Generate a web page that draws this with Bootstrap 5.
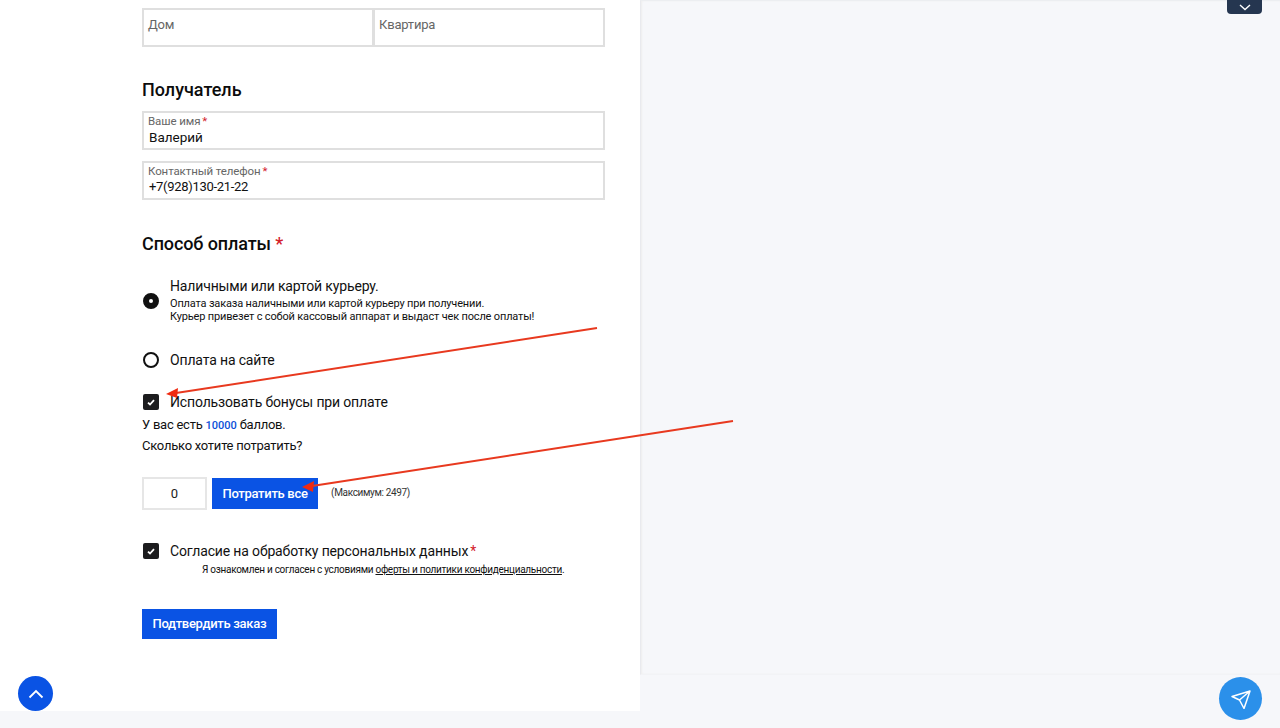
<!DOCTYPE html>
<html lang="ru">
<head>
<meta charset="utf-8">
<title>Оформление заказа</title>
<link href="https://cdn.jsdelivr.net/npm/bootstrap@5.3.0/dist/css/bootstrap.min.css" rel="stylesheet">
<style>
html,body{height:728px;overflow:hidden}
body{background:#f6f7fa;font-family:Roboto,"Liberation Sans",sans-serif;color:#111;position:relative}
.pane-left{width:640px;height:711px;background:#fff;padding:8px 35px 0 142px;flex:none}
.pane-right{flex:1;height:675px;border-left:1px solid #e9eaee;border-top:1px solid #eceef1;border-bottom:1px solid #f2f3f6;box-shadow:inset 1px 0 2px #eee}
.fld{border:2px solid #dfdfdf;background:#fff;height:39px;padding:0 4px;color:#666;line-height:16px}
.fld-half{flex:1 1 0;font-size:13px;letter-spacing:-.2px;padding-top:7px}
.fld-half+.fld-half{margin-left:-1px}
.fld-next{margin-top:11px}
.fld-lab{display:block;padding-top:1px;font-size:11.5px;line-height:15px;letter-spacing:-.1px}
.fld-val{display:block;color:#111;font-size:13.5px;line-height:16px;padding-left:1px}
.fld-tel{font-size:13px;letter-spacing:-.3px}
.req{color:#d3202a;margin-left:2px}
.sec-title{font-size:18px;font-weight:500;line-height:22px;color:#0c0c0c;margin:0}
.sec-title .req{margin-left:0}
.t1{margin-top:32px;margin-bottom:10px}
.t2{margin-top:33px;letter-spacing:-.1px}
.mark-radio{width:16px;height:16px;border:2px solid #111;border-radius:50%;flex:none;margin:0 11px 0 1px}
.mark-on{background:#111;position:relative;margin-top:3px}
.mark-on::after{content:"";position:absolute;left:4px;top:4px;width:4px;height:4px;border-radius:50%;background:#fff}
.mark-box{width:16px;height:16px;border-radius:2px;background:#1c1c1e;flex:none;margin:0 11px 0 1px;display:flex;align-items:center;justify-content:center}
.opt-main{font-size:14px;line-height:20px;letter-spacing:-.15px}
.opt-sub{font-size:11px;line-height:13px;color:#111;letter-spacing:-.165px}
.opt1{margin-top:21px}
.opt1 .opt-main{margin-bottom:1px}
.opt2{margin-top:27px}
.opt3{margin-top:22px}
.para{font-size:13px;line-height:16px;margin:0;letter-spacing:-.25px}
.para-a{margin-top:5px}
.para-b{margin-top:4px}
.pts{color:#0a4fd8;font-weight:500;font-size:11px;letter-spacing:0}
.spend-row{margin-top:23px}
.qty{width:65px;height:33px;border:2px solid #e6e6e6;text-align:center;font-size:13px;line-height:29px;color:#222}
.btn-blue{background:#0a53e4;border:0;border-radius:0;color:#fff;font-weight:500;font-size:13px;line-height:16px;padding:7px 10.5px;height:31px;letter-spacing:-.3px}
.btn-blue:hover{background:#0a53e4;color:#fff}
.btn-spend{margin-left:5px}
.maxi{font-size:10px;letter-spacing:-.35px;color:#333;margin-left:13px;margin-top:-2px}
.opt4{margin-top:31px}
.agree{font-size:10px;letter-spacing:-.28px;line-height:14px;margin:2px 0 0 60px;color:#111;white-space:nowrap}
.agree a{color:#111}
.btn-order{margin-top:32px;height:30px;padding-top:6px}
.tab-top{position:absolute;top:0;left:1227px;width:35px;height:14px;background:#253650;border-radius:0 0 4px 4px;display:flex;align-items:center;justify-content:center}
.fab{position:absolute;border-radius:50%;display:flex;align-items:center;justify-content:center}
.fab-up{left:18px;top:676px;width:35px;height:35px;background:#0a53e4}
.fab-send{left:1219px;top:677px;width:43px;height:43px;background:#2b90ea}
.arrows{position:absolute;left:0;top:0;pointer-events:none}
</style>
</head>
<body>
<div class="d-flex align-items-start">
  <main class="pane-left">
    <div class="d-flex">
      <div class="fld fld-half">Дом</div>
      <div class="fld fld-half">Квартира</div>
    </div>
    <h2 class="sec-title t1">Получатель</h2>
    <div class="fld"><span class="fld-lab">Ваше имя<span class="req">*</span></span><span class="fld-val">Валерий</span></div>
    <div class="fld fld-next"><span class="fld-lab">Контактный телефон<span class="req">*</span></span><span class="fld-val fld-tel">+7(928)130-21-22</span></div>
    <h2 class="sec-title t2">Способ оплаты <span class="req">*</span></h2>
    <div class="d-flex align-items-center opt1">
      <span class="mark-radio mark-on"></span>
      <div>
        <div class="opt-main">Наличными или картой курьеру.</div>
        <div class="opt-sub">Оплата заказа наличными или картой курьеру при получении.<br>Курьер привезет с собой кассовый аппарат и выдаст чек после оплаты!</div>
      </div>
    </div>
    <div class="d-flex align-items-center opt2">
      <span class="mark-radio"></span><span class="opt-main">Оплата на сайте</span>
    </div>
    <div class="d-flex align-items-center opt3">
      <span class="mark-box"><svg width="8" height="7" viewBox="0 0 8 7"><path d="M1 3.600 3 5.500 7 1.200" fill="none" stroke="#fff" stroke-width="1.800"/></svg></span><span class="opt-main">Использовать бонусы при оплате</span>
    </div>
    <p class="para para-a">У вас есть <span class="pts">10000</span> баллов.</p>
    <p class="para para-b">Сколько хотите потратить?</p>
    <div class="d-flex align-items-center spend-row">
      <div class="qty">0</div>
      <button type="button" class="btn btn-blue btn-spend">Потратить все</button>
      <span class="maxi">(Максимум: 2497)</span>
    </div>
    <div class="d-flex align-items-center opt4">
      <span class="mark-box"><svg width="8" height="7" viewBox="0 0 8 7"><path d="M1 3.600 3 5.500 7 1.200" fill="none" stroke="#fff" stroke-width="1.800"/></svg></span><span class="opt-main">Согласие на обработку персональных данных<span class="req">*</span></span>
    </div>
    <p class="agree">Я ознакомлен и согласен с условиями <a href="#">оферты и политики конфиденциальности</a>.</p>
    <button type="button" class="btn btn-blue btn-order">Подтвердить заказ</button>
  </main>
  <div class="pane-right"></div>
</div>

<div class="tab-top"><svg width="12" height="7" viewBox="0 0 12 7"><path d="M1 1 6 5.500 11 1" fill="none" stroke="#fff" stroke-width="1.400"/></svg></div>
<div class="fab fab-up"><svg width="16" height="10" viewBox="0 0 16 10"><path d="M1.500 8.500 8 2l6.500 6.500" fill="none" stroke="#fff" stroke-width="1.800"/></svg></div>
<div class="fab fab-send"><svg width="20" height="20" viewBox="0 0 20 20"><path d="M1 7.500 19 2 13 19.500 8.500 11ZM8.500 11 19 2" fill="none" stroke="#fff" stroke-width="1.500" stroke-linejoin="round"/></svg></div>

<svg class="arrows" width="1280" height="728" viewBox="0 0 1280 728">
  <path d="M597 328 176 393" stroke="#e8391f" stroke-width="2" fill="none"/>
  <path d="M166 394 178 388 177 398Z" fill="#f02a10"/>
  <path d="M733 421 312 486" stroke="#e8391f" stroke-width="2" fill="none"/>
  <path d="M302 487 314 481 313 492Z" fill="#f02a10"/>
</svg>
</body>
</html>
